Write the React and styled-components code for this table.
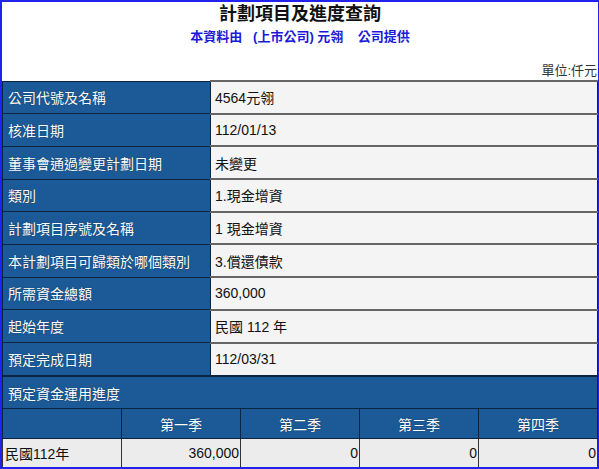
import styled, { createGlobalStyle } from "styled-components";

const GlobalStyle = createGlobalStyle`
  html, body {
    margin: 0;
    padding: 0;
    background: #fff;
  }
  body {
    font-family: Arial, "Liberation Sans", "Noto Sans CJK TC", sans-serif;
  }
`;

const rows = [
  ["公司代號及名稱", "4564元翎"],
  ["核准日期", "112/01/13"],
  ["董事會通過變更計劃日期", "未變更"],
  ["類別", "1.現金增資"],
  ["計劃項目序號及名稱", "1 現金增資"],
  ["本計劃項目可歸類於哪個類別", "3.償還債款"],
  ["所需資金總額", "360,000"],
  ["起始年度", "民國 112 年"],
  ["預定完成日期", "112/03/31"],
];

const quarters = ["第一季", "第二季", "第三季", "第四季"];
const progress = [{ year: "民國112年", values: ["360,000", "0", "0", "0"] }];

export default function App() {
  return (
    <>
      <GlobalStyle />
      <Frame>
        <Title>計劃項目及進度查詢</Title>
        <Source>
          本資料由&nbsp;&nbsp;&nbsp;(上市公司) 元翎&nbsp;&nbsp;&nbsp;&nbsp;公司提供
        </Source>
        <Unit>單位:仟元</Unit>
        <Table>
          <tbody>
            {rows.map(([label, value]) => (
              <tr key={label}>
                <Label>{label}</Label>
                <Value>{value}</Value>
              </tr>
            ))}
          </tbody>
        </Table>
        <Table>
          <tbody>
            <tr>
              <Label colSpan={5} $wide>
                預定資金運用進度
              </Label>
            </tr>
            <tr>
              <QHead />
              {quarters.map((q) => (
                <QHead key={q}>{q}</QHead>
              ))}
            </tr>
            {progress.map((p) => (
              <tr key={p.year}>
                <QCell>{p.year}</QCell>
                {p.values.map((v, i) => (
                  <QCell key={i} $num>
                    {v}
                  </QCell>
                ))}
              </tr>
            ))}
          </tbody>
        </Table>
      </Frame>
    </>
  );
}

const Frame = styled.div`
  box-sizing: border-box;
  width: 599px;
  height: 469px;
  overflow: hidden;
  border: 2px solid #2222ee;
  border-right-width: 1px;
  background: #fff;
`;

const Title = styled.h1`
  margin: 0;
  height: 25px;
  line-height: 25px;
  text-align: center;
  font-size: 18px;
  font-weight: bold;
  color: #111;
`;

const Source = styled.div`
  text-align: center;
  font-size: 13px;
  font-weight: bold;
  color: #1a1ad8;
  line-height: 20px;
`;

const Unit = styled.div`
  margin-top: 15px;
  text-align: right;
  font-size: 13px;
  color: #333;
  line-height: 18px;
  padding-right: 1px;
`;

const Table = styled.table`
  width: 100%;
  border-collapse: collapse;
  table-layout: fixed;
  font-size: 14px;
`;

const Label = styled.td`
  width: ${(p) => (p.$wide ? "auto" : "197px")};
  height: 31.7px;
  padding: 0 5px;
  background: #1b5a96;
  color: #fff;
  border: 1px solid #0b2540;
  text-shadow: 0 0 1px #0d2744;
  white-space: nowrap;
`;

const Value = styled.td`
  padding: 0 4px;
  background: #f4f4f4;
  color: #111;
  border: 1px solid #0b2540;
  border-top: 2px solid #666;
`;

const QHead = styled.td`
  height: 29px;
  padding: 0;
  text-align: center;
  background: #1b5a96;
  color: #fff;
  border: 1px solid #0b2540;
  text-shadow: 0 0 1px #0d2744;
`;

const QCell = styled.td`
  height: 28px;
  padding: 0 1px 0 2px;
  background: #ececec;
  color: #111;
  text-align: ${(p) => (p.$num ? "right" : "left")};
  border-left: 1px solid #333;
  border-right: 1px solid #333;
`;
